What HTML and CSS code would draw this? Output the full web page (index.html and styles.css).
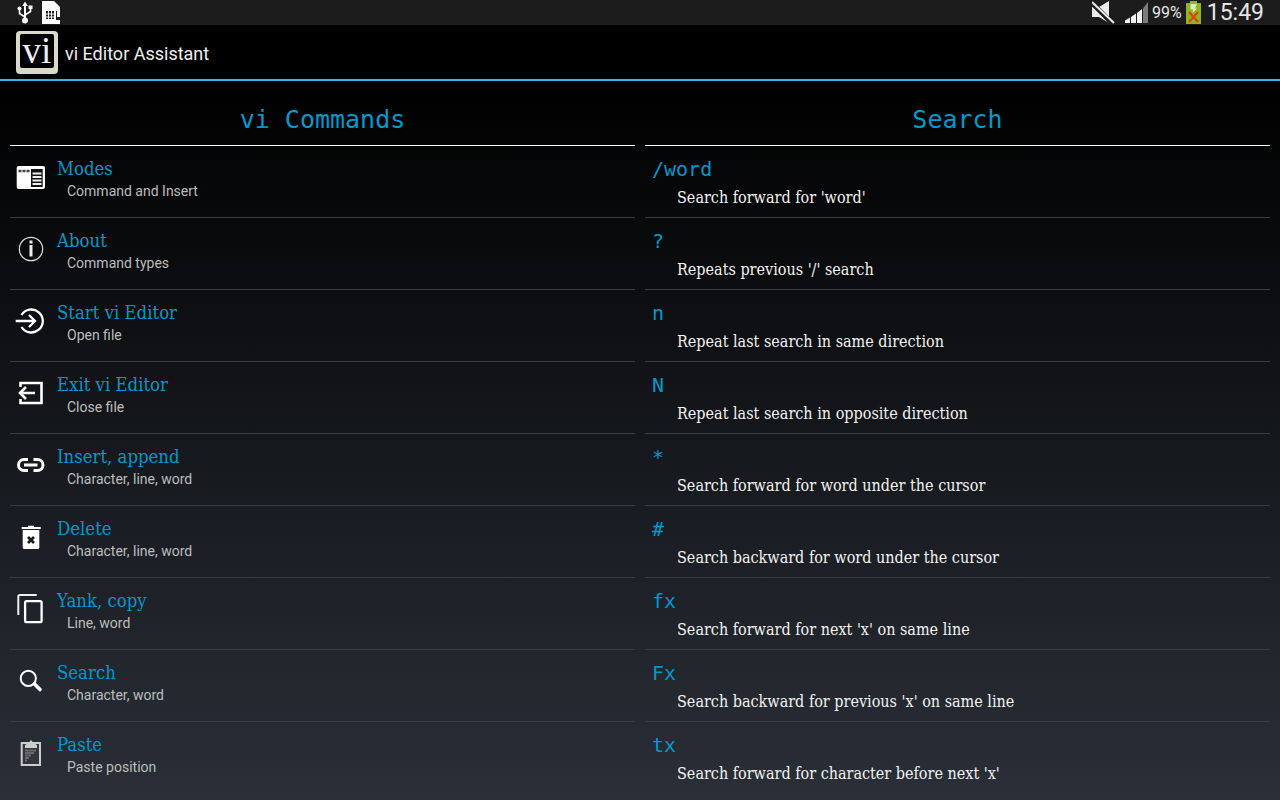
FILE: index.html
```html
<!DOCTYPE html>
<html lang="en">
<head>
  <meta charset="UTF-8" />
  <title>vi Editor Assistant</title>
  <link rel="stylesheet" href="styles.css">
</head>
<body>
  <!-- Status bar -->
  <div class="status-bar">
    <div class="status-left">
      <svg class="usb" width="16" height="23" viewBox="0 0 16 23"><path d="M8 0.500 L10.800 5 H9 V17 H7 V5 H5.200 Z" fill="#fff"/><circle cx="8" cy="19.500" r="3" fill="#fff"/><path d="M8 16 L2.500 12.500 V8 M8 14 L13.500 10.500 V7" stroke="#fff" stroke-width="1.600" fill="none"/><circle cx="2.500" cy="7.500" r="2" fill="#fff"/><rect x="11.500" y="4.500" width="4" height="3.500" fill="#fff"/></svg>
      <svg class="sd" width="19" height="23" viewBox="0 0 19 23"><path d="M0 0 H12 L18 6 V23 H0 Z" fill="#fff"/><path d="M4 10 H12 V18 H4 Z M14 10 H15 V16 H14 Z" fill="#1c1c1c"/><path d="M6.500 10 V18 M9.500 10 V18 M4 13 H12 M4 16 H12" stroke="#fff" stroke-width="1"/><rect x="14" y="16" width="4" height="3" fill="#1c1c1c"/></svg>
    </div>
    <div class="status-right">
      <svg class="mute" width="23" height="23" viewBox="0 0 23 23"><path d="M0 6 H7 L17 0 V22 L7 16 H0 Z" fill="#ececec"/><path d="M-1 1 L21 23" stroke="#1c1c1c" stroke-width="5"/><path d="M0 1 L22 22" stroke="#ececec" stroke-width="2"/></svg>
      <svg class="signal" width="24" height="23" viewBox="0 0 24 23"><path d="M0 22 V19.500 L5 16.500 V22 Z M6 22 V16 L11 12.500 V22 Z M12 22 V12 L17 8 V22 Z" fill="#f2f2f2"/><path d="M18 22 V7.500 L23 1 V22 Z" fill="#7c7c7c"/></svg>
      <span class="pct">99%</span>
      <svg class="battery" width="15" height="23" viewBox="0 0 15 23"><rect x="4" y="0" width="7" height="2" fill="#8cb81c"/><rect x="0" y="2" width="15" height="21" fill="#8cb81c"/><path d="M4.500 3 H11 L9 7.500 H11 L6.500 12 L7 8.500 H4.500 Z" fill="#dfe8c0"/><path d="M3 11 L12 21 M12 11 L3 21" stroke="#e0431c" stroke-width="2.400"/></svg>
      <span class="clock">15:49</span>
    </div>
  </div>

  <!-- Action bar -->
  <div class="action-bar">
    <div class="logo"><span class="logo-text">vi</span></div>
    <span class="app-title">vi Editor Assistant</span>
  </div>

  <div class="content">
    <!-- Left column -->
    <div class="column">
      <h1 class="column-title">vi Commands</h1>
      <ul class="list">
        <li class="row">
          <svg class="icon" viewBox="0 0 32 32"><rect x="1.700" y="4" width="28.300" height="23" rx="2" fill="#fff"/><rect x="16" y="7" width="11.700" height="18" fill="#111"/><path d="M17.500 11.500 H26.500 M17.500 15 H26.500 M17.500 18.500 H26.500 M17.500 22 H26.500" stroke="#eee" stroke-width="1.800"/><path d="M3.500 9 H15" stroke="#444" stroke-width="2.400" stroke-dasharray="3 1"/></svg>
          <div class="row-text"><div class="row-title">Modes</div><div class="row-sub">Command and Insert</div></div>
        </li>
        <li class="row">
          <svg class="icon" viewBox="0 0 32 32"><circle cx="16" cy="15" r="11.700" fill="none" stroke="#ddd" stroke-width="1.200"/><rect x="14.500" y="11" width="3" height="11.500" fill="#eee"/><rect x="14.500" y="6.500" width="3" height="3" fill="#eee"/></svg>
          <div class="row-text"><div class="row-title">About</div><div class="row-sub">Command types</div></div>
        </li>
        <li class="row">
          <svg class="icon" viewBox="0 0 32 32"><path d="M6.500 9 A11.500 11.500 0 1 1 6.500 21" fill="none" stroke="#fff" stroke-width="2.300"/><path d="M0.700 15 H20 M14 9 L20 15 L14 21" fill="none" stroke="#fff" stroke-width="2.300"/></svg>
          <div class="row-text"><div class="row-title">Start vi Editor</div><div class="row-sub">Open file</div></div>
        </li>
        <li class="row">
          <svg class="icon" viewBox="0 0 32 32"><path d="M5.500 9 V5 H26.500 V25 H5.500 V21" fill="none" stroke="#fff" stroke-width="2.600"/><path d="M20 15 H5 M11 9 L5 15 L11 21" fill="none" stroke="#fff" stroke-width="2.600"/></svg>
          <div class="row-text"><div class="row-title">Exit vi Editor</div><div class="row-sub">Close file</div></div>
        </li>
        <li class="row">
          <svg class="icon" viewBox="0 0 32 32"><path d="M13 9.500 H9 A5.500 5.500 0 0 0 9 20.500 H13 M18.500 9.500 H22.500 A5.500 5.500 0 0 1 22.500 20.500 H18.500 M9 15 H22.500" fill="none" stroke="#fff" stroke-width="3"/></svg>
          <div class="row-text"><div class="row-title">Insert, append</div><div class="row-sub">Character, line, word</div></div>
        </li>
        <li class="row">
          <svg class="icon" viewBox="0 0 32 32"><path d="M6.700 5 H13 V3.700 H19 V5 H25.700 V7 H6.700 Z" fill="#fff"/><path d="M7.700 8 H24.300 V25.500 Q24.300 27 22.800 27 H9.200 Q7.700 27 7.700 25.500 Z" fill="#fff"/><path d="M13 15 L19 21 M19 15 L13 21" stroke="#1a1d20" stroke-width="2.800"/></svg>
          <div class="row-text"><div class="row-title">Delete</div><div class="row-sub">Character, line, word</div></div>
        </li>
        <li class="row">
          <svg class="icon" viewBox="0 0 32 32"><path d="M3.300 21 V2.500 Q3.300 1 4.800 1 H21.700" fill="none" stroke="#eee" stroke-width="2"/><rect x="10.100" y="7.100" width="16.500" height="21.100" rx="1.500" fill="none" stroke="#fff" stroke-width="2.300"/></svg>
          <div class="row-text"><div class="row-title">Yank, copy</div><div class="row-sub">Line, word</div></div>
        </li>
        <li class="row">
          <svg class="icon" viewBox="0 0 32 32"><circle cx="13.300" cy="12.300" r="7.600" fill="none" stroke="#fff" stroke-width="2"/><path d="M19.500 18 L25 23.500" stroke="#fff" stroke-width="3.600" stroke-linecap="round"/></svg>
          <div class="row-text"><div class="row-title">Search</div><div class="row-sub">Character, word</div></div>
        </li>
        <li class="row">
          <svg class="icon" viewBox="0 0 32 32"><rect x="6.700" y="5" width="18.300" height="22" fill="#33363c" stroke="#ccc" stroke-width="2"/><path d="M10 7 L13.500 5 L16 2 L18.500 5 L22 7 V10 H10 Z" fill="#ccc"/><path d="M10 12.500 H21 M10 15 H19 M10 17.500 H16 M10 20 H14 M10 22.500 H12" stroke="#6a6a6a" stroke-width="1.800"/></svg>
          <div class="row-text"><div class="row-title">Paste</div><div class="row-sub">Paste position</div></div>
        </li>
      </ul>
    </div>

    <!-- Right column -->
    <div class="column">
      <h1 class="column-title">Search</h1>
      <ul class="list">
        <li class="cmd"><div class="cmd-key">/word</div><div class="cmd-desc">Search forward for 'word'</div></li>
        <li class="cmd"><div class="cmd-key">?</div><div class="cmd-desc">Repeats previous '/' search</div></li>
        <li class="cmd"><div class="cmd-key">n</div><div class="cmd-desc">Repeat last search in same direction</div></li>
        <li class="cmd"><div class="cmd-key">N</div><div class="cmd-desc">Repeat last search in opposite direction</div></li>
        <li class="cmd"><div class="cmd-key">*</div><div class="cmd-desc">Search forward for word under the cursor</div></li>
        <li class="cmd"><div class="cmd-key">#</div><div class="cmd-desc">Search backward for word under the cursor</div></li>
        <li class="cmd"><div class="cmd-key">fx</div><div class="cmd-desc">Search forward for next 'x' on same line</div></li>
        <li class="cmd"><div class="cmd-key">Fx</div><div class="cmd-desc">Search backward for previous 'x' on same line</div></li>
        <li class="cmd"><div class="cmd-key">tx</div><div class="cmd-desc">Search forward for character before next 'x'</div></li>
      </ul>
    </div>
  </div>
</body>
</html>
```

FILE: styles.css
```css
* {
  margin: 0;
  padding: 0;
  box-sizing: border-box;
}
html, body {
  height: 800px;
  overflow: hidden;
}
body {
  background: #000;
  font-family: "Roboto", sans-serif;
  color: #fff;
}

/* Status bar */
.status-bar {
  height: 25px;
  background: #1c1c1c;
  display: flex;
  justify-content: space-between;
}
.status-left {
  display: flex;
  gap: 9px;
  padding: 1px 0 0 17px;
}
.status-right {
  display: flex;
  align-items: flex-start;
  padding: 1px 16px 0 0;
}
.mute { margin-right: 10px; }
.signal { margin-right: 3px; }
.pct {
  font-size: 16px;
  line-height: 24px;
  color: #e6e6e6;
  margin-right: 4px;
}
.clock {
  font-size: 23px;
  line-height: 24px;
  color: #e6e6e6;
  margin-left: 6px;
}

/* Action bar */
.action-bar {
  height: 56px;
  background: #000;
  border-bottom: 2px solid #33b5e5;
  display: flex;
  align-items: center;
  padding-left: 16px;
}
.logo {
  width: 42px;
  height: 43px;
  margin-top: 1px;
  background: #d9d8c9;
  border-radius: 4px;
  padding: 3px 4px 6px;
  display: flex;
}
.logo-text {
  flex: 1;
  background: #000;
  border-radius: 2px;
  color: #eee;
  font-family: "Liberation Serif", serif;
  font-size: 37px;
  line-height: 33px;
  text-align: center;
}
.app-title {
  margin: 2px 0 0 7px;
  font-size: 18px;
  color: #eee;
}

/* Main content */
.content {
  height: 719px;
  background: linear-gradient(#000, #2a2f38);
  display: flex;
  gap: 10px;
  padding: 0 10px;
}
.column {
  flex: 1;
  min-width: 0;
}
.column-title {
  height: 65px;
  padding-top: 24px;
  border-bottom: 1px solid #fff;
  font-family: "DejaVu Sans Mono", monospace;
  font-size: 25px;
  font-weight: normal;
  line-height: 30px;
  text-align: center;
  color: #0099cc;
}
.list {
  list-style: none;
}

/* Left list rows */
.row {
  height: 72px;
  border-bottom: 1px solid #3a3d40;
  display: flex;
}
.row:last-child,
.cmd:last-child {
  border-bottom: none;
}
.icon {
  width: 32px;
  height: 32px;
  margin: 16px 0 0 5px;
  flex: none;
}
.row-text {
  margin-left: 10px;
  padding-top: 10px;
}
.row-title {
  font-family: "DejaVu Serif", serif;
  font-stretch: condensed;
  font-size: 18.4px;
  line-height: 25px;
  color: #0099cc;
}
.row-sub {
  margin-left: 10px;
  font-size: 14px;
  line-height: 20px;
  color: #bdbdbd;
}

/* Right list rows */
.cmd {
  height: 72px;
  border-bottom: 1px solid #3a3d40;
  padding: 10px 0 0 7px;
}
.cmd-key {
  font-family: "DejaVu Sans Mono", monospace;
  font-size: 20px;
  line-height: 26px;
  color: #0099cc;
}
.cmd-desc {
  margin: 6px 0 0 25px;
  font-family: "DejaVu Serif", serif;
  font-stretch: condensed;
  font-size: 16px;
  line-height: 20px;
  color: #f2f2f2;
}
```
